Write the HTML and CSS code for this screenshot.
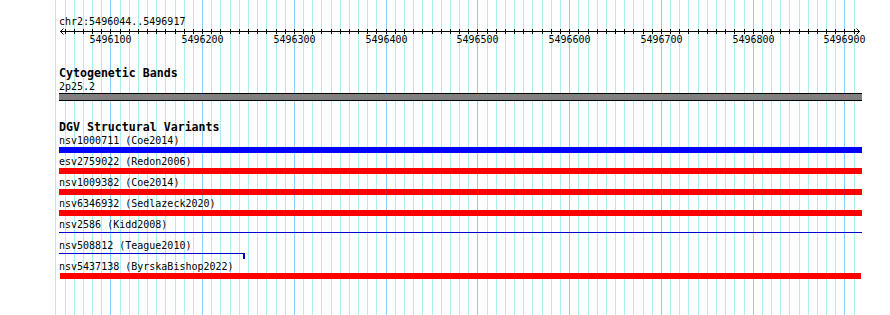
FILE: index.html
```html
<!DOCTYPE html>
<html lang="en">
<head>
    <meta charset="UTF-8">
    <title>chr2:5496044..5496917</title>
    <link rel="stylesheet" href="styles.css">
</head>
<body>
    <div class="panel">
        <svg class="grid" id="grid" width="890" height="315"></svg>

        <div class="ruler">
            <div class="ruler-label">chr2:5496044..5496917</div>
            <svg class="axis" id="axis" width="890" height="40"></svg>
        </div>

        <div class="track">
            <div class="track-title">Cytogenetic Bands</div>
            <div class="band-label">2p25.2</div>
            <div class="band"></div>
        </div>

        <div class="track track-dgv">
            <div class="track-title">DGV Structural Variants</div>
            <div class="feature">
                <div class="feature-label">nsv1000711 (Coe2014)</div>
                <div class="bar blue"></div>
            </div>
            <div class="feature">
                <div class="feature-label">esv2759022 (Redon2006)</div>
                <div class="bar red"></div>
            </div>
            <div class="feature">
                <div class="feature-label">nsv1009382 (Coe2014)</div>
                <div class="bar red"></div>
            </div>
            <div class="feature">
                <div class="feature-label">nsv6346932 (Sedlazeck2020)</div>
                <div class="bar red"></div>
            </div>
            <div class="feature">
                <div class="feature-label">nsv2586 (Kidd2008)</div>
                <div class="bar thin"><div class="stroke"></div></div>
            </div>
            <div class="feature">
                <div class="feature-label">nsv508812 (Teague2010)</div>
                <div class="bar thin capped"><div class="stroke"></div></div>
            </div>
            <div class="feature">
                <div class="feature-label">nsv5437138 (ByrskaBishop2022)</div>
                <div class="bar red short"></div>
            </div>
        </div>
    </div>

    <script>
        const NS = 'http://www.w3.org/2000/svg';
        const start = 5496044;
        const end = 5496917;
        const left = 59;
        const scale = 0.9176;

        function px(bp) {
            return Math.round(left + (bp - start) * scale);
        }

        function el(name, attrs, text) {
            const node = document.createElementNS(NS, name);
            for (const key in attrs) node.setAttribute(key, attrs[key]);
            if (text) node.textContent = text;
            return node;
        }

        // grid lines, every 10 bp, darker every 100 bp
        const grid = document.getElementById('grid');
        for (let bp = 5496040; bp <= 5496910; bp += 10) {
            const x = px(bp) + 0.5;
            grid.appendChild(el('line', {
                x1: x, x2: x, y1: 0, y2: 315,
                class: bp % 100 === 0 ? 'major' : 'minor'
            }));
        }

        // ruler
        const axis = document.getElementById('axis');
        axis.appendChild(el('line', { x1: 60, x2: 860, y1: 4.5, y2: 4.5, class: 'tick' }));
        axis.appendChild(el('polyline', { points: '63.5,1.5 60.5,4.5 63.5,7.5', class: 'arrow' }));
        axis.appendChild(el('polyline', { points: '856.5,1.5 859.5,4.5 856.5,7.5', class: 'arrow' }));

        for (let bp = 5496050; bp < end; bp += 10) {
            const x = px(bp) + 0.5;
            axis.appendChild(el('line', { x1: x, x2: x, y1: 2, y2: 7, class: 'tick' }));
            if (bp % 100 === 0) {
                axis.appendChild(el('text', { x: x, y: 16, class: 'tick-label' }, String(bp)));
            }
        }
    </script>
</body>
</html>
```

FILE: styles.css
```css
body {
    margin: 0;
    background: #fff;
    color: #000;
    font-family: "DejaVu Sans Mono", monospace;
    font-size: 10px;
}

.panel {
    position: relative;
    z-index: 0;
    width: 890px;
    height: 315px;
    overflow: hidden;
}

.grid {
    position: absolute;
    top: 0;
    left: 0;
    z-index: -1;
    shape-rendering: crispEdges;
}

.grid .minor {
    stroke: #aeeeee;
    stroke-width: 1;
}

.grid .major {
    stroke: #87cefa;
    stroke-width: 1;
}

.ruler {
    height: 67px;
}

.ruler-label {
    padding: 16px 0 0 59px;
    line-height: 11px;
    height: 11px;
}

.axis {
    display: block;
}

.axis .tick {
    stroke: #000;
    stroke-width: 1;
    shape-rendering: crispEdges;
}

.axis .arrow {
    fill: none;
    stroke: #000;
    stroke-width: 1;
}

.axis .tick-label {
    font-family: "DejaVu Sans Mono", monospace;
    font-size: 10px;
    text-anchor: middle;
    fill: #000;
}

.track-title {
    padding-left: 59px;
    font-size: 11.6px;
    font-weight: bold;
    line-height: 13px;
    height: 13px;
}

.band-label {
    margin-top: 1px;
    padding-left: 59px;
    line-height: 11px;
    height: 11px;
}

.band {
    margin: 1px 0 0 59px;
    width: 803px;
    height: 6px;
    background: #808080;
    border-top: 1px solid #000;
    border-bottom: 1px solid #000;
}

.track-dgv {
    margin-top: 20px;
}

.track-dgv .track-title {
    margin-bottom: 1px;
}

.feature {
    height: 21px;
}

.feature-label {
    padding-left: 59px;
    line-height: 11px;
    height: 11px;
    white-space: pre;
}

.bar {
    margin: 1px 0 0 59px;
    width: 803px;
    height: 6px;
}

.bar.blue {
    background: #0000ff;
}

.bar.red {
    background: #ff0000;
}

.bar.short {
    margin-left: 60px;
    width: 801px;
}

.bar.thin .stroke {
    margin-top: 2px;
    height: 1px;
    background: #0000cc;
}

.bar.capped {
    width: 184px;
    border-right: 2px solid #0000cc;
}
```
